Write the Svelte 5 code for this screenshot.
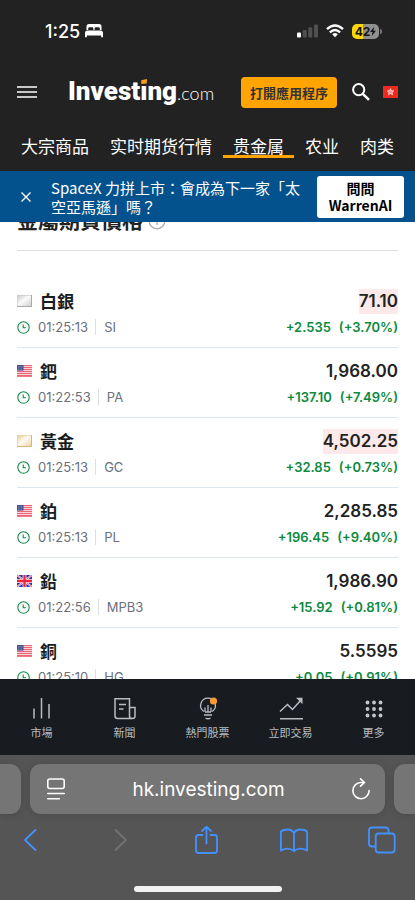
<script>
  const tabs = ['大宗商品', '实时期货行情', '贵金属', '农业', '肉类'];
  const activeTab = '贵金属';

  const rows = [
    { flag: 'silver', name: '白銀', time: '01:25:13', code: 'SI', price: '71.10', change: '+2.535', pct: '(+3.70%)', flash: true },
    { flag: 'us', name: '鈀', time: '01:22:53', code: 'PA', price: '1,968.00', change: '+137.10', pct: '(+7.49%)' },
    { flag: 'gold', name: '黃金', time: '01:25:13', code: 'GC', price: '4,502.25', change: '+32.85', pct: '(+0.73%)', flash: true },
    { flag: 'us', name: '鉑', time: '01:25:13', code: 'PL', price: '2,285.85', change: '+196.45', pct: '(+9.40%)' },
    { flag: 'gb', name: '鉛', time: '01:22:56', code: 'MPB3', price: '1,986.90', change: '+15.92', pct: '(+0.81%)' },
    { flag: 'us', name: '銅', time: '01:25:10', code: 'HG', price: '5.5595', change: '+0.05', pct: '(+0.91%)' }
  ];

  const nav = [
    { id: 'markets', label: '市場' },
    { id: 'news', label: '新聞' },
    { id: 'hot', label: '熱門股票' },
    { id: 'trade', label: '立即交易' },
    { id: 'more', label: '更多' }
  ];

  let address = $state('hk.investing.com');
</script>

{#snippet flagIcon(kind)}
  <svg class="flag" viewBox="0 0 15 12" aria-hidden="true">
    {#if kind === 'us'}
      <rect width="15" height="12" fill="#f9dfe2" />
      {#each [0, 2, 4, 6, 8, 10] as y}
        <rect {y} width="15" height="1.1" fill="#ee6675" />
      {/each}
      <rect y="11.2" width="15" height=".8" fill="#ee6675" />
      <rect width="6.5" height="5.6" fill="#4a5596" />
      <path d="M1.2 1.4h4M1.2 2.9h4M1.2 4.4h4" stroke="#a5abd0" stroke-width=".6" stroke-dasharray=".7 .8" />
    {:else if kind === 'gb'}
      <rect width="15" height="12" fill="#2433b0" />
      <path d="M0 0l15 12M15 0L0 12" stroke="#f4e6ee" stroke-width="2" />
      <path d="M0 0l15 12M15 0L0 12" stroke="#e8445a" stroke-width=".8" />
      <path d="M7.500 0v12M0 6h15" stroke="#fbe9ec" stroke-width="3.800" />
      <path d="M7.500 0v12M0 6h15" stroke="#f0243c" stroke-width="2.300" />
    {:else}
      <defs>
        <linearGradient id="metal-silver" x1="0" y1="0" x2="1" y2="1">
          <stop offset="0" stop-color="#c4c6c9" /><stop offset=".45" stop-color="#fafafa" /><stop offset="1" stop-color="#c9cbce" />
        </linearGradient>
        <linearGradient id="metal-gold" x1="0" y1="0" x2="1" y2="1">
          <stop offset="0" stop-color="#e8c98a" /><stop offset=".45" stop-color="#fffaf0" /><stop offset="1" stop-color="#ecd29a" />
        </linearGradient>
      </defs>
      <rect width="15" height="12" fill={`url(#metal-${kind})`} />
      <path d="M.4 12V.4H15" fill="none" stroke={kind === 'gold' ? '#e6d0a0' : '#cccdd0'} stroke-width=".8" />
      <path d="M0 11.500H14.500V0" fill="none" stroke={kind === 'gold' ? '#d5b67a' : '#a6a8ab'} />
    {/if}
  </svg>
{/snippet}

<div class="screen">
  <div class="status">
    <div class="clock">
      <span>1:25</span>
      <svg width="18" height="14" viewBox="0 0 18 14" fill="#fff" aria-hidden="true">
        <path d="M1.500 6V2.500Q1.500 0 4 0h10q2.500 0 2.500 2.500V6h-1.700V4.600Q14.800 3.300 13.500 3.300h-2.700q-1.200 0-1.200 1.200V6H8.400V4.500q0-1.200-1.200-1.200H4.500Q3.200 3.300 3.200 4.600V6zM2.500 6.500h13Q18 6.500 18 9v4.200h-1.800v-1.700H1.800v1.700H0V9q0-2.500 2.500-2.500z" />
      </svg>
    </div>
    <div class="signals">
      <svg width="21" height="14" viewBox="0 0 21 14" aria-hidden="true">
        <rect y="8.500" width="4" height="5" rx="1" fill="#fff" />
        <rect x="5.700" y="6" width="4" height="7.500" rx="1" fill="#505050" />
        <rect x="11.300" y="3.300" width="4" height="10.200" rx="1" fill="#505050" />
        <rect x="17" y=".5" width="4" height="13" rx="1" fill="#505050" />
      </svg>
      <svg width="18" height="14" viewBox="0 0 18 14" fill="none" stroke="#fff" stroke-width="2.300" aria-hidden="true">
        <path d="M1 5.200Q9-2.200 17 5.200M3.900 8.300Q9 3.600 14.100 8.300" />
        <path d="M6.200 10.200Q9 8 11.800 10.200L9 13.300z" fill="#fff" stroke="none" />
      </svg>
      <div class="battery"><span>42</span><svg width="6" height="9" viewBox="0 0 6 9" aria-hidden="true"><path d="M4.200 0L0 5h2.600L1.800 9 6 3.800H3.400z" fill="#151515" /></svg></div>
    </div>
  </div>

  <header>
    <button class="plain menu" aria-label="選單">
      <svg width="20" height="12" viewBox="0 0 20 12" stroke="#fff" stroke-width="1.500" aria-hidden="true"><path d="M0 1h20M0 6h20M0 11h20" /></svg>
    </button>
    <a class="logo" href="/"><strong>Invest<span class="i">i</span>ng</strong><span class="com">.com</span></a>
    <button class="open-app">打開應用程序</button>
    <button class="plain search" aria-label="搜尋">
      <svg width="18" height="18" viewBox="0 0 18 18" fill="none" stroke="#fff" stroke-width="2" aria-hidden="true"><circle cx="6.700" cy="6.700" r="5.600" /><path d="M10.800 10.800l6.200 6" stroke-width="2.500" /></svg>
    </button>
    <button class="plain" aria-label="香港">
      <svg width="15" height="12" viewBox="0 0 15 12" aria-hidden="true">
        <rect width="15" height="12" fill="#ee2a20" />
        <path d="M7.500 2.600l.9 2.100 2.300.2-1.700 1.500.5 2.300-2-1.200-2 1.200.5-2.300-1.700-1.500 2.300-.2z" fill="#f58a80" stroke="#fff" stroke-width=".7" />
      </svg>
    </button>
  </header>

  <nav class="tabs">
    {#each tabs as tab}
      <a href="#{tab}" class:active={tab === activeTab}>{tab}</a>
    {/each}
  </nav>

  <aside>
    <button class="plain close" aria-label="關閉">
      <svg width="10" height="10" viewBox="0 0 10 10" stroke="#fff" stroke-width="1.400" aria-hidden="true"><path d="M.5.5l9 9M9.500.5l-9 9" /></svg>
    </button>
    <p>SpaceX 力拼上市：會成為下一家「太空亞馬遜」嗎？</p>
    <button class="ask">問問 WarrenAI</button>
  </aside>

  <main>
    <div class="heading">
      <h1>金屬期貨價格</h1>
      <svg width="18" height="18" viewBox="0 0 18 18" fill="none" stroke="#a9abae" stroke-width="1.300" aria-hidden="true"><circle cx="9" cy="9" r="7.800" /><path d="M9 8v5M9 4.700v1.500" /></svg>
    </div>
    <ul>
      {#each rows as row}
        <li>
          <div class="line">
            {@render flagIcon(row.flag)}
            <a class="name" href="#{row.code}">{row.name}</a>
            <span class="price" class:flash={row.flash}>{row.price}</span>
          </div>
          <div class="line">
            <svg class="time-icon" width="13" height="13" viewBox="0 0 13 13" fill="none" stroke="#128a45" aria-hidden="true"><circle cx="6.500" cy="6.500" r="5.700" stroke-width="1.100" /><path d="M6.200 3.500v3.300H9" stroke-width="1.100" /></svg>
            <time>{row.time}</time>
            <span class="code">{row.code}</span>
            <span class="change">{row.change}</span>
            <span class="pct">{row.pct}</span>
          </div>
        </li>
      {/each}
    </ul>
  </main>

  <nav class="bottom">
    {#each nav as item}
      <a href="#{item.id}">
        <svg width="26" height="24" viewBox="0 0 26 24" fill="none" stroke="#b9bcc1" stroke-width="1.500" aria-hidden="true">
          {#if item.id === 'markets'}
            <path d="M5 11.500v10M12.500 1v20.500M20 7v14.500" />
          {:else if item.id === 'news'}
            <path d="M17.500 10V1.800H3V19q0 2.500 2.500 2.500h15q2.500 0 2.500-2.500v-8.500h-5.500V19q0 2.500 2.500 2.500M7 7.500h7M7 12h4.500" />
          {:else if item.id === 'hot'}
            <path d="M8.800 14.500A7.300 7.300 0 0 1 13 1.200 7.300 7.300 0 0 1 17.200 14.500M9 18h8M10.500 21q2.500 1.500 5 0M13 8v7M10 10.500V15M16 10.500V15M10 15h6" stroke-width="1.300" />
            <circle cx="18.500" cy="4" r="3.600" fill="#f99a35" stroke="none" />
          {:else if item.id === 'trade'}
            <path d="M2 14.500l7.500-7 5 5L23 3M2 21.700h23" /><path d="M18 .8h6.500v6.500z" fill="#b9bcc1" stroke="none" />
          {:else}
            {#each [5.500, 12, 18.500] as y}
              {#each [6.500, 13, 19.500] as x}
                <circle cx={x} cy={y} r="1.900" fill="#c3c6ca" stroke="none" />
              {/each}
            {/each}
          {/if}
        </svg>
        <span>{item.label}</span>
      </a>
    {/each}
  </nav>

  <footer>
    <div class="cards">
      <div class="stub left"></div>
      <div class="address">
        <button class="plain" aria-label="頁面選項">
          <svg width="18" height="22" viewBox="0 0 18 22" fill="none" stroke="#fff" stroke-width="1.600" stroke-linecap="round" aria-hidden="true"><rect x=".8" y="1" width="16.400" height="9.500" rx="2" /><path d="M.8 15.500h16.400M.8 20.700h11.500" /></svg>
        </button>
        <input type="text" aria-label="網址" bind:value={address} />
        <button class="plain" aria-label="重新載入">
          <svg width="18" height="22" viewBox="0 0 18 22" fill="none" stroke="#fff" stroke-width="1.600" stroke-linecap="round" stroke-linejoin="round" aria-hidden="true"><path d="M12.300 4.500H9A8.100 8.100 0 1 0 17.100 12.500M8.500 .8l4 3.700-4 3.700" /></svg>
        </button>
      </div>
      <div class="stub right"></div>
    </div>
    <div class="toolbar">
      <button class="plain" aria-label="返回"><svg viewBox="0 0 28 28"><path d="M19.500 4L9 14 19.500 24" /></svg></button>
      <button class="plain" aria-label="前進" disabled><svg viewBox="0 0 28 28"><path d="M11.500 4L22 14 11.500 24" /></svg></button>
      <button class="plain" aria-label="分享"><svg viewBox="0 0 28 28"><path d="M10.500 9H6.500Q4 9 4 11.500v13Q4 27 6.500 27h16q2.500 0 2.500-2.500v-13Q25 9 22.500 9h-4M14.500 17.500V1M10 5l4.500-4.300L19 5" /></svg></button>
      <button class="plain" aria-label="書籤"><svg viewBox="0 0 28 28"><path d="M14 7Q12 3.500 7.500 3.500 3 3.500.9 5.500v19Q4 22.700 7.500 22.700q4 0 6.500 2.300 2.500-2.300 6.500-2.300 3.500 0 6.600 1.800v-19Q25 3.500 20.500 3.500 16 3.500 14 7zv18" /></svg></button>
      <button class="plain" aria-label="分頁"><svg viewBox="0 0 28 28"><path d="M20.500 7V4.500Q20.500 1.500 17.500 1.500H4Q1 1.500 1 4.500v13q0 3 3 3h3.500" /><rect x="7.700" y="7.500" width="19" height="19" rx="3" /></svg></button>
    </div>
    <div class="home"></div>
  </footer>
</div>

<style>
  :global(body) { margin: 0; }
  .screen {
    display: flex;
    flex-direction: column;
    height: 100vh;
    overflow: hidden;
    background: #fff;
    color: #222;
    font-family: Inter, "Noto Sans CJK TC", sans-serif;
  }
  .screen * { box-sizing: border-box; }
  button, input { font-family: inherit; margin: 0; border: 0; }
  a { color: inherit; text-decoration: none; }
  svg { display: block; flex: none; }
  .plain { display: flex; padding: 0; background: none; }

  .status {
    display: flex;
    justify-content: space-between;
    align-items: center;
    flex: none;
    height: 62px;
    padding: 0 32px 0 45px;
    background: #222;
    color: #fff;
  }
  .clock, .signals { display: flex; align-items: center; }
  .clock { gap: 5px; font-size: 18px; font-weight: 500; }
  .signals { gap: 8px; }
  .battery {
    position: relative;
    display: flex;
    align-items: center;
    justify-content: center;
    width: 27px;
    height: 15px;
    margin-right: 4px;
    border-radius: 5px;
    background: linear-gradient(90deg, #ffd60a 42%, #909090 42%);
    color: #151515;
    font-size: 12px;
    font-weight: 700;
  }
  .battery::after {
    content: "";
    position: absolute;
    right: -3px;
    top: 5px;
    width: 2px;
    height: 5px;
    border-radius: 0 2px 2px 0;
    background: #777;
  }

  header {
    display: flex;
    align-items: center;
    flex: none;
    height: 60px;
    padding: 0 17px;
    background: #222;
    color: #fff;
  }
  .logo { display: flex; align-items: baseline; margin: 0 auto 0 31px; line-height: 30px; }
  .logo strong { font: 900 26px/30px Roboto, sans-serif; }
  .i { position: relative; }
  .i::before {
    content: "";
    position: absolute;
    left: 0;
    top: 2px;
    width: 8px;
    height: 8px;
    background: #222;
  }
  .i::after {
    content: "";
    position: absolute;
    left: 1px;
    top: 3px;
    width: 6px;
    height: 5px;
    background: #f7a01d;
    clip-path: polygon(0 25%, 100% 0, 90% 90%, 0 100%);
  }
  .com { font: 300 18px/30px Lato, sans-serif; }
  .open-app {
    height: 31px;
    padding: 0 9px;
    border-radius: 4px;
    background: #ffa400;
    color: #333;
    font-size: 13px;
    font-weight: 700;
    white-space: nowrap;
  }
  .search { margin: 0 13px 0 15px; }

  .tabs {
    display: flex;
    gap: 1px;
    flex: none;
    height: 49px;
    padding: 7px 11px 0;
    overflow: hidden;
    background: #222;
    color: #fff;
    font: 17px/34px "Noto Sans CJK SC", sans-serif;
    white-space: nowrap;
  }
  .tabs a { height: 29px; padding: 0 10px; }
  .tabs .active { border-bottom: 3px solid #ffa400; }

  aside {
    display: flex;
    align-items: center;
    flex: none;
    height: 51px;
    padding: 0 11px 0 21px;
    background: #03528d;
    color: #fff;
    font-family: "Noto Sans CJK TC", sans-serif;
  }
  aside p { flex: 1; margin: 0 16px 0 20px; font-size: 15px; line-height: 19px; }
  .ask {
    width: 87px;
    height: 42px;
    padding: 0 10px;
    border-radius: 3px;
    background: #fff;
    color: #000;
    font-size: 14px;
    font-weight: 700;
    line-height: 17px;
  }

  main { flex: 1; min-height: 0; overflow: hidden; padding: 0 17px; }
  .heading {
    display: flex;
    align-items: center;
    gap: 5px;
    height: 45px;
    margin-top: -16px;
    padding-bottom: 15px;
    border-bottom: 1px solid #dcdee1;
  }
  h1 { margin: 0; font-size: 21px; line-height: 30px; font-weight: 700; }
  ul { margin: 27px 0 0; padding: 0; list-style: none; }
  li { height: 70px; padding-top: 10px; border-bottom: 1px solid #dde6ee; }
  .line { display: flex; align-items: center; height: 26px; font-size: 13px; }
  .flag { width: 15px; height: 12px; margin-right: 8px; }
  .name { color: #181c21; font: 700 17px/26px "Noto Sans CJK TC", sans-serif; }
  .price { margin-left: auto; font-size: 17px; line-height: 25px; font-weight: 600; }
  .flash { background: #fde9e9; }
  .time-icon { margin-right: 8px; }
  time, .code { color: #6a707c; }
  .code { margin-left: 7px; padding-left: 8px; border-left: 1px solid #dcdfe4; }
  .change, .pct { color: #0b8a3e; font-weight: 600; }
  .change { margin-left: auto; }
  .pct { margin-left: 8px; }

  .bottom { display: flex; flex: none; height: 76px; padding-top: 18px; background: #181c21; color: #b9bcc1; }
  .bottom a {
    display: flex;
    flex: 1;
    flex-direction: column;
    align-items: center;
    gap: 3px;
    font: 11px/16px "Noto Sans CJK TC", sans-serif;
  }

  footer { flex: none; height: 145px; padding-top: 9px; background: #555; }
  .cards { display: flex; gap: 9px; height: 50px; }
  .stub, .address { background: #757575; box-shadow: 0 1px 8px #0002; }
  .stub { flex: 0 0 21px; }
  .left { border-radius: 0 11px 11px 0; }
  .right { border-radius: 11px 0 0 11px; }
  .address { display: flex; flex: 1; min-width: 0; align-items: center; padding: 0 15px 0 17px; border-radius: 11px; }
  input {
    flex: 1;
    min-width: 0;
    padding: 0;
    background: none;
    color: #fff;
    font-size: 19px;
    text-align: center;
    outline: 0;
  }
  .toolbar { display: flex; justify-content: space-between; padding: 12px 19px 0 16px; }
  .toolbar svg { width: 28px; height: 28px; fill: none; stroke: #4391ff; stroke-width: 1.800; stroke-linecap: round; stroke-linejoin: round; }
  .toolbar button:disabled svg { stroke: #737373; }
  .home { width: 148px; height: 6px; margin: 32px auto 0; border-radius: 3px; background: #f2f2f2; }
</style>
